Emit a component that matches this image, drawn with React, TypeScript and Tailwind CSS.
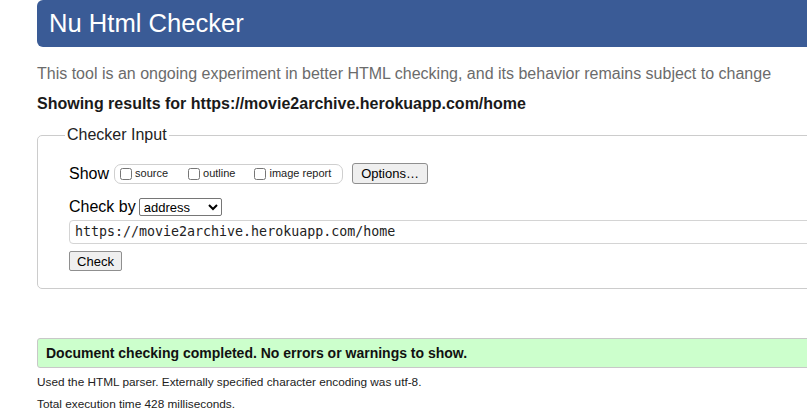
export default function App() {
  return (
    <div className="h-[408px] w-[807px] overflow-hidden bg-white font-['Liberation_Sans',Arial,sans-serif] text-black">
      <div className="ml-[37px] w-[900px]">
        {/* Title bar */}
        <div className="flex h-[47px] items-center rounded-[6px] bg-[#3a5b96] pl-[12px]">
          <h1 className="text-[25.6px] leading-none text-white">Nu Html Checker</h1>
        </div>

        <p className="mt-[18px] text-[16px] leading-[18px] text-[#6b6b6b]">
          This tool is an ongoing experiment in better HTML checking, and its behavior remains subject to change
        </p>
        <p className="mt-[12px] text-[16px] font-bold leading-[18px] text-[#1a1a1a]">
          Showing results for https://movie2archive.herokuapp.com/home
        </p>

        {/* Checker input fieldset */}
        <fieldset className="mt-[13px] h-[163px] rounded-[5px] border border-[#cccccc] pl-[31px] pr-0">
          <legend className="ml-[-4px] px-[2px] text-[16px] leading-[18px] text-[#222]">Checker Input</legend>

          <div className="mt-[19px] flex items-center">
            <span className="text-[16px] leading-[18px]">Show</span>
            <div className="ml-[5px] flex h-[20px] w-[229px] items-center rounded-[7px] border border-[#cfcfcf] pl-[5px] text-[11px] text-[#222]">
              <label className="flex items-center">
                <input type="checkbox" className="m-0 h-[12px] w-[12px]" />
                <span className="ml-[3px]">source</span>
              </label>
              <label className="ml-[20px] flex items-center">
                <input type="checkbox" className="m-0 h-[12px] w-[12px]" />
                <span className="ml-[3px]">outline</span>
              </label>
              <label className="ml-[19px] flex items-center">
                <input type="checkbox" className="m-0 h-[12px] w-[12px]" />
                <span className="ml-[3px]">image report</span>
              </label>
            </div>
            <button className="ml-[9px] h-[21px] w-[76px] rounded-[3px] border border-[#8f8f8f] bg-[#efefef] text-[13px] leading-none">
              Options…
            </button>
          </div>

          <div className="mt-[14px] flex items-center">
            <span className="text-[16px] leading-[18px]">Check by</span>
            <select className="ml-[3px] h-[18px] w-[83px] rounded-[2px] border border-[#767676] bg-white text-[13px] leading-none">
              <option>address</option>
            </select>
          </div>

          <div className="mt-[4px] flex h-[24px] w-[800px] items-center rounded-[4px] border border-[#d4d4d4] pl-[5px] font-['DejaVu_Sans_Mono',monospace] text-[13.3px] text-[#222]">
            https://movie2archive.herokuapp.com/home
          </div>

          <button className="mt-[7px] h-[20px] w-[53px] rounded-[2px] border border-[#8f8f8f] bg-[#efefef] text-[13px] leading-none">
            Check
          </button>
        </fieldset>

        {/* Result */}
        <div className="mt-[49px] flex h-[30px] items-center rounded-[3px] border border-[#c8c8c8] bg-[#ccffcc] pl-[8px] text-[14px] font-bold text-[#111]">
          Document checking completed. No errors or warnings to show.
        </div>
        <p className="mt-[7px] text-[11.8px] leading-[14px] text-[#222]">
          Used the HTML parser. Externally specified character encoding was utf-8.
        </p>
        <p className="mt-[8px] text-[11.8px] leading-[14px] text-[#222]">Total execution time 428 milliseconds.</p>
      </div>
    </div>
  );
}
